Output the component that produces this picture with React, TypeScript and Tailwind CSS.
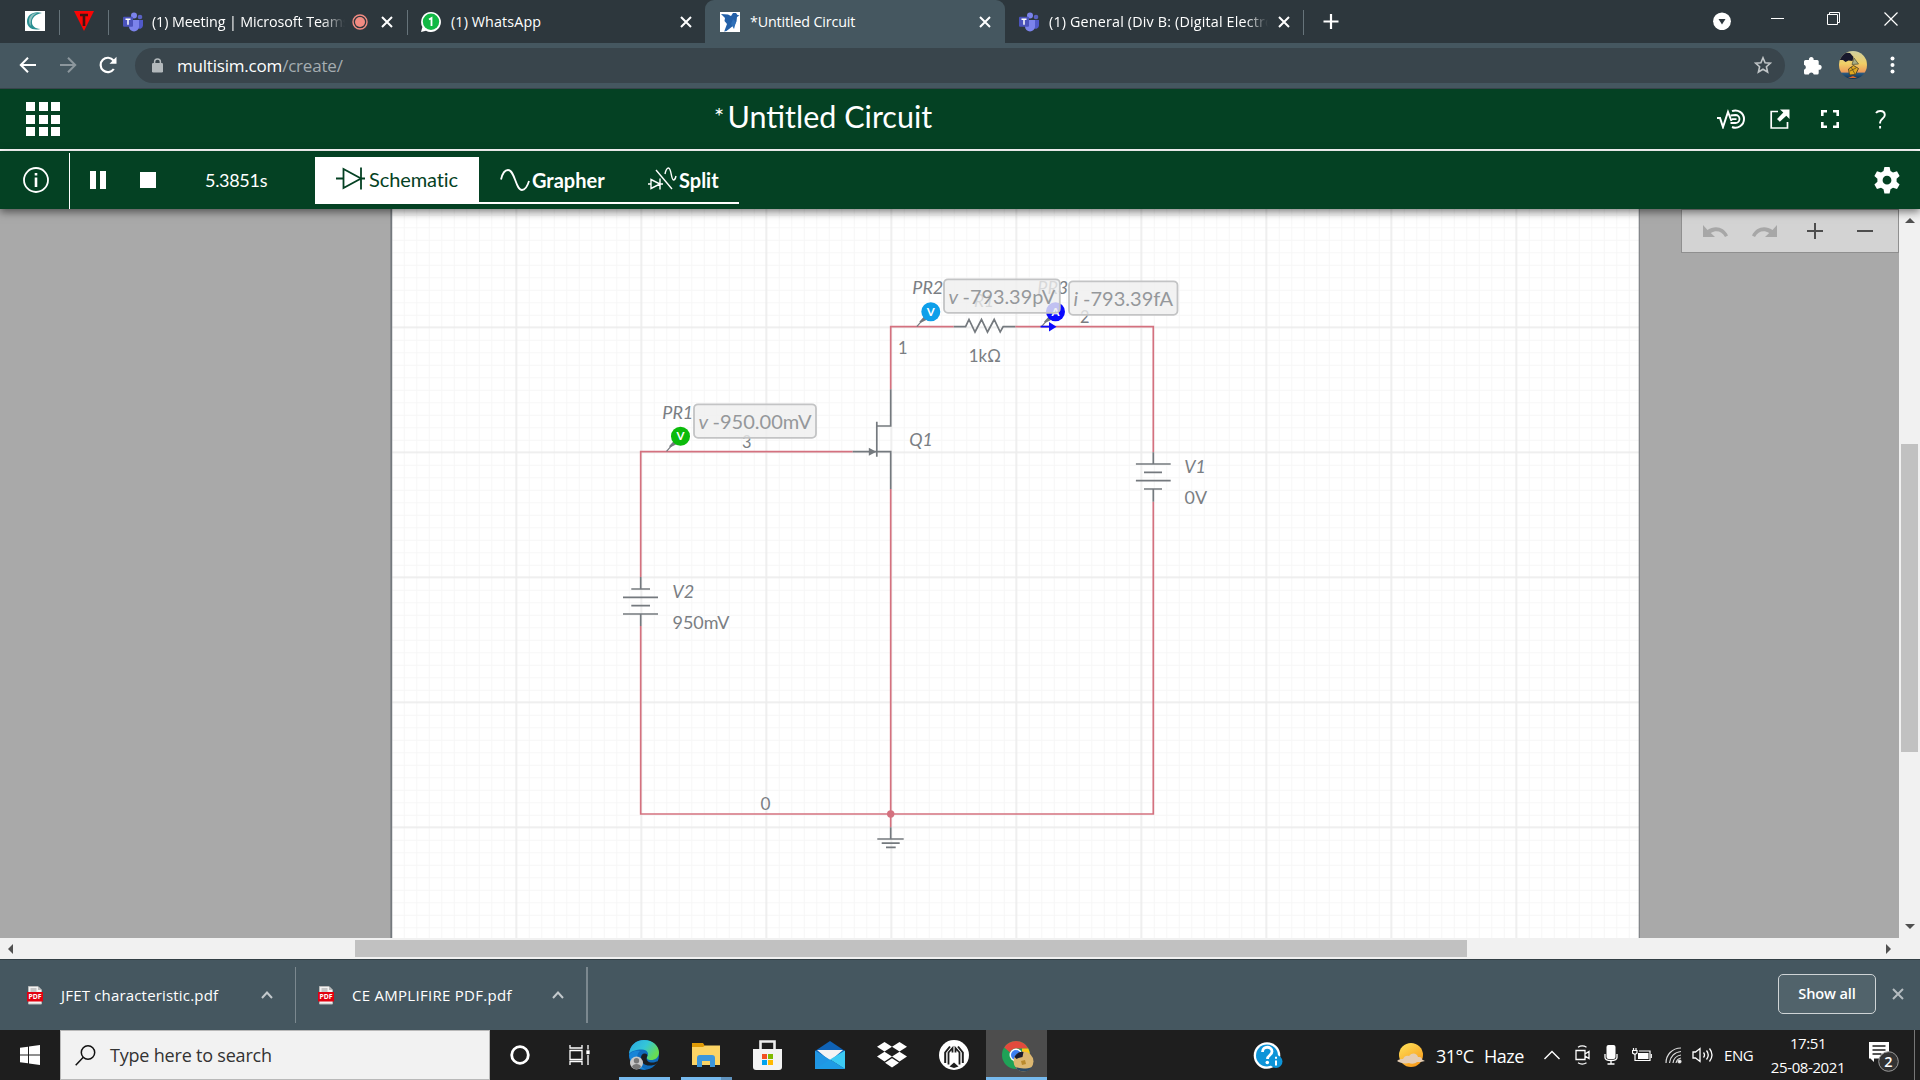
import React from "react";

const UI = "font-['Open_Sans',sans-serif]";

const WIRE = "#d4717f";
const PART = "#74797e";
const LABEL = "#7a7e83";

function TabClose({ className = "" }: { className?: string }) {
  return (
    <svg className={"shrink-0 " + className} width="12" height="12" viewBox="0 0 12 12" stroke="#fff" strokeWidth="2">
      <path d="M1 1l10 10M11 1L1 11" />
    </svg>
  );
}

function TabDivider() {
  return <div className="mt-[10px] h-[25px] w-px shrink-0 bg-[#66737a]" />;
}

function TeamsIcon() {
  return (
    <svg className="shrink-0" width="20" height="20" viewBox="0 0 20 20">
      <circle cx="17" cy="5" r="2.3" fill="#5a62c3" />
      <circle cx="11" cy="3.4" r="3" fill="#7b83eb" />
      <path d="M14.5 8H20v5.5a3.4 3.4 0 0 1-5.5 2.5z" fill="#5059c9" />
      <path d="M6 8h10v6.500a5 5 0 0 1-10 0z" fill="#7b83eb" />
      <rect x="0" y="4.800" width="10" height="10" rx="1" fill="#4b53bc" />
      <path d="M2.500 7.300h5M5 7.300v5.500" stroke="#fff" strokeWidth="1.500" />
    </svg>
  );
}

function TabStrip() {
  return (
    <div className={"flex h-[43px] items-stretch bg-[#2d373d] text-[14.3px] text-white " + UI}>
      <div className="flex w-[59px] shrink-0 pl-[25px] pt-[11px]">
        <svg width="20" height="20" viewBox="0 0 20 20">
          <rect width="20" height="20" fill="#fff" />
          <path d="M17 2C9-.5 2 3.500 2 10.500 2 16 7 20 15.500 18 9.500 17.500 6.500 14.500 7 10 7.400 6.500 11 3 17 2z" fill="#2a8f92" />
          <path d="M12 2C7 2 4 5.500 4 10c0 2 .8 4 2 5C5 10 6.500 5 12 2z" fill="#8fc0c0" />
        </svg>
      </div>
      <TabDivider />
      <div className="flex w-[48px] shrink-0 pl-[14px] pt-[11px]">
        <svg width="20" height="20" viewBox="0 0 20 20">
          <path d="M0 0h20L10 20z" fill="#f90505" />
          <path d="M6 4h8M10 4v11" stroke="#3d1512" strokeWidth="2.600" />
        </svg>
      </div>
      <TabDivider />
      <div className="flex w-[298px] shrink-0 items-center pl-[14px]">
        <TeamsIcon />
        <div className="ml-[9px] w-[193px] overflow-hidden whitespace-nowrap tracking-[-0.1px] [mask-image:linear-gradient(to_right,#000_88%,transparent)]">
          (1) Meeting | Microsoft Teams
        </div>
        <svg className="ml-[7px] shrink-0" width="16" height="16" viewBox="0 0 16 16">
          <circle cx="8" cy="8" r="7" fill="none" stroke="#f28b82" strokeWidth="1.400" />
          <circle cx="8" cy="8" r="5" fill="#f28b82" />
        </svg>
        <TabClose className="ml-[13px]" />
      </div>
      <TabDivider />
      <div className="flex w-[297px] shrink-0 items-center rounded-br-[9px] pl-[13px]">
        <svg className="shrink-0" width="20" height="20" viewBox="0 0 20 20">
          <path d="M10 0a10 10 0 1 1-5 18.700L0 20l1.400-5A10 10 0 0 1 10 0z" fill="#fff" />
          <circle cx="10" cy="9.800" r="8.200" fill="#12b844" />
          <path d="M8 7.500l2.500-1.500v8" fill="none" stroke="#fff" strokeWidth="1.800" />
        </svg>
        <div className="ml-[10px] w-[229px] tracking-[0.12px]">(1) WhatsApp</div>
        <TabClose />
      </div>
      <div className="flex w-[300px] shrink-0 items-center rounded-t-[9px] bg-[#455760] pl-[15px]">
        <svg className="shrink-0" width="20" height="20" viewBox="0 0 20 20">
          <rect width="20" height="20" fill="#fff" />
          <path d="M1 2l7 .5L11 4l2-3 3 0 1.500 2 2 .5-2.500 1.500-.5 4.500c-1 3-3.500 4.500-5.500 6L6.500 19l-2.300.5 2.800-7.500L4.500 9 5 6z" fill="#2360a8" />
          <path d="M13 7l3 3-2 7-3-5z" fill="#2f70b8" />
        </svg>
        <div className="ml-[10px] w-[229px] tracking-[-0.15px]">*Untitled Circuit</div>
        <TabClose />
      </div>
      <div className="flex w-[298px] shrink-0 items-center pl-[14px]">
        <TeamsIcon />
        <div className="ml-[10px] w-[219px] overflow-hidden whitespace-nowrap tracking-[0.18px] [mask-image:linear-gradient(to_right,#000_90%,transparent)]">
          (1) General (Div B: (Digital Electro
        </div>
        <TabClose className="ml-[10px]" />
      </div>
      <TabDivider />
      <svg className="ml-[19px] mt-[14px] shrink-0" width="16" height="16" viewBox="0 0 16 16" stroke="#fff" strokeWidth="2.200">
        <path d="M8 0v15M.5 7.500h15" />
      </svg>
      <svg className="ml-[374px] mt-[12px] shrink-0" width="18" height="18" viewBox="0 0 18 18">
        <circle cx="9" cy="9.300" r="8.900" fill="#fff" />
        <path d="M5.500 7h7L9 12.500z" fill="#2d373d" />
      </svg>
      <div className="ml-[40px] mt-[18px] h-px w-[13px] shrink-0 bg-white" />
      <svg className="ml-[43px] mt-[12px] shrink-0" width="14" height="14" viewBox="0 0 14 14" fill="none" stroke="#fff">
        <path d="M.5 2.500h10v10h-10zM2.500 2.500v-2h10v10h-2" />
      </svg>
      <svg className="ml-[43px] mt-[12px] shrink-0" width="14" height="14" viewBox="0 0 14 14" stroke="#fff" strokeWidth="1.200">
        <path d="M.5.5l13 13M13.500.5l-13 13" />
      </svg>
    </div>
  );
}

function AddressBar() {
  return (
    <div className={"flex h-[46px] items-center border-b border-[#38444b] bg-[#455760] pb-px " + UI}>
      <svg className="ml-[19px] shrink-0" width="18" height="16" viewBox="0 0 18 16" fill="none" stroke="#fff" strokeWidth="2">
        <path d="M17 8H2M9 .8L1.800 8 9 15.200" />
      </svg>
      <svg className="ml-[22px] shrink-0" width="18" height="16" viewBox="0 0 18 16" fill="none" stroke="#8c979d" strokeWidth="2">
        <path d="M1 8h15M9 .8L16.200 8 9 15.200" />
      </svg>
      <svg className="ml-[22px] shrink-0" width="18" height="18" viewBox="0 0 18 18">
        <path d="M14.800 13A7.200 7.200 0 1 1 14.500 4.500" fill="none" stroke="#fff" strokeWidth="2.200" />
        <path d="M17.500.8v7h-7z" fill="#fff" />
      </svg>
      <div className="ml-[18px] flex h-[35px] w-[1650px] shrink-0 items-center rounded-full bg-[#39454c] text-[17px]">
        <svg className="ml-[17px] shrink-0" width="11" height="15" viewBox="0 0 11 15">
          <rect y="5" width="11" height="9.500" rx="1.200" fill="#b3b9bc" />
          <path d="M2.600 6V3.800a2.900 2.900 0 0 1 5.800 0V6" fill="none" stroke="#b3b9bc" strokeWidth="1.500" />
        </svg>
        <div className="ml-[14px] w-[1577px] pt-[2px] tracking-[-0.2px] text-white">
          multisim.com<span className="text-[#a5adb1]">/create/</span>
        </div>
        <svg className="shrink-0" width="18" height="18" viewBox="0 0 18 18" fill="none" stroke="#c0c5c7" strokeWidth="1.600">
          <path d="M9 1.800l2.100 5 5.300.4-4 3.500 1.200 5.300L9 13.200 4.400 16l1.200-5.300-4-3.500 5.300-.4z" />
        </svg>
      </div>
      <svg className="ml-[18px] shrink-0" width="19" height="19" viewBox="0 0 19 19">
        <path
          d="M1 5.500a1.500 1.500 0 0 1 1.500-1.500H6a2.400 2.400 0 1 1 4.600 0h3.600a1.500 1.500 0 0 1 1.500 1.500v3.300a2.500 2.500 0 1 1 0 4.900v3.300a1.500 1.500 0 0 1-1.500 1.500h-3.400a2.600 2.600 0 0 0-5 0H2.500A1.500 1.500 0 0 1 1 17v-3.300a2.600 2.600 0 0 0 0-5z"
          fill="#fff"
        />
      </svg>
      <svg className="ml-[17px] shrink-0" width="28" height="28" viewBox="0 0 28 28">
        <defs>
          <linearGradient id="sunset" x1="0" y1="0" x2="0" y2="1">
            <stop offset="0" stopColor="#cfd0a0" />
            <stop offset=".45" stopColor="#f0cf66" />
            <stop offset=".76" stopColor="#ee9a5a" />
            <stop offset=".78" stopColor="#2d5f86" />
            <stop offset="1" stopColor="#122d4b" />
          </linearGradient>
          <clipPath id="avatarClip">
            <circle cx="14" cy="14" r="14" />
          </clipPath>
        </defs>
        <g clipPath="url(#avatarClip)">
          <rect width="28" height="28" fill="url(#sunset)" />
          <path d="M0 4L6 1.500l5 .5 3.500 4-1 4-4-.5-3 1.500L4 9 0 9z" fill="#17182c" />
          <path d="M15 7l4.500 6-6.500.5z" fill="#a8ad84" stroke="#59583c" strokeWidth=".8" />
          <path d="M9.500 18l5-3.500 5 3-3 6-6 .5z" fill="#e0a91f" stroke="#4c4228" strokeWidth=".9" />
          <path d="M11 20l6-3M12 16l4 7" stroke="#4c4228" strokeWidth=".7" />
          <path d="M9 27h9l-4-2z" fill="#d9672b" />
        </g>
      </svg>
      <svg className="ml-[23px] shrink-0" width="5" height="18" viewBox="0 0 5 18" fill="#fff">
        <circle cx="2.500" cy="2.500" r="2" />
        <circle cx="2.500" cy="9" r="2" />
        <circle cx="2.500" cy="15.500" r="2" />
      </svg>
    </div>
  );
}

function TitleBar() {
  return (
    <div className="flex h-[62px] items-center border-b-2 border-white bg-[#044123] font-['Lato',sans-serif] text-white">
      <div className="ml-[26px] grid w-[34px] shrink-0 grid-cols-3 gap-x-[3.500px] gap-y-[3.500px]">
        {Array.from({ length: 9 }, (_, i) => (
          <div key={i} className="h-[9px] w-[9px] bg-white" />
        ))}
      </div>
      <div className="ml-[654px] flex w-[1003px] shrink-0 items-center pb-[6px]">
        <span className="w-[13.500px] text-[24px] leading-[36px]">*</span>
        <span className="text-[30.5px] leading-[36px]">Untitled Circuit</span>
      </div>
      <svg className="shrink-0" width="28" height="20" viewBox="0 0 28 20" fill="none" stroke="#fff" strokeWidth="2">
        <path d="M0 9h3l3 9L11 3l3.500 9" />
        <path d="M13.500 6.500l5-.5a4 4 0 0 1 0 8h-5M15 10.200h4.500" strokeWidth="1.800" />
        <path d="M15 2.200A8.600 8.600 0 1 1 15 18" />
      </svg>
      <svg className="ml-[25px] shrink-0" width="20" height="20" viewBox="0 0 20 20">
        <path d="M8 2.500H1.200V19H17.500v-6" fill="none" stroke="#fff" strokeWidth="1.700" />
        <path d="M10 .5h9.500V10l-3.200-3.200-6.500 6L7 10l6.300-6.500z" fill="#fff" />
      </svg>
      <svg className="ml-[31px] shrink-0" width="18" height="18" viewBox="0 0 18 18" fill="none" stroke="#fff" strokeWidth="2.600">
        <path d="M1.300 6V1.300H6M12 1.300h4.700V6M16.700 12v4.700H12M6 16.700H1.300V12" />
      </svg>
      <svg className="ml-[36px] shrink-0" width="11" height="19" viewBox="0 0 11 19" fill="none" stroke="#fff" strokeWidth="1.900">
        <path d="M1 3C2 1.500 3.500 1 5.200 1 8 1 9.800 2.500 9.800 5c0 3.500-4.700 4-4.700 7.500v1M5.100 16v2.500" />
      </svg>
    </div>
  );
}

function SimulationBar() {
  return (
    <div className="relative z-10 flex h-[58px] items-center bg-[#044123] font-['Lato',sans-serif] text-white shadow-[0_3px_8px_rgba(0,0,0,0.5)]">
      <svg className="ml-[23px] shrink-0" width="26" height="26" viewBox="0 0 26 26">
        <circle cx="13" cy="13" r="12" fill="none" stroke="#fff" strokeWidth="1.800" />
        <path d="M13 10.500V20M13 6v2.600" stroke="#fff" strokeWidth="2.600" />
      </svg>
      <div className="ml-[20px] h-[56px] w-px shrink-0 self-end bg-white" />
      <div className="ml-[20px] h-[18px] w-[6px] shrink-0 bg-white" />
      <div className="ml-[4px] h-[18px] w-[6px] shrink-0 bg-white" />
      <div className="ml-[34px] h-[16px] w-[16px] shrink-0 bg-white" />
      <div className="ml-[49px] w-[110px] shrink-0 text-[18px] tracking-[-0.3px]">5.3851s</div>
      <div className="flex h-[47px] w-[424px] shrink-0 text-[20px]">
        <div className="flex w-[164px] items-center bg-white text-[#044123]">
          <svg className="-mt-[2px] ml-[21px] shrink-0" width="30" height="24" viewBox="0 0 30 24" fill="none" stroke="#044123" strokeWidth="1.800">
            <path d="M0 11.500h7.500M7.500 2v19L25 11.500zM25 .5v22M25 11.500h4" />
          </svg>
          <span className="-mt-[2px] ml-[3px] tracking-[-0.1px]">Schematic</span>
        </div>
        <div className="flex w-[260px] items-center border-b-2 border-white font-bold">
          <svg className="ml-[21px] mt-[1px] shrink-0" width="30" height="22" viewBox="0 0 30 22" fill="none" stroke="#fff" strokeWidth="1.800">
            <path d="M1 10.500C2.500 4 5 1 8 1c7 0 7.500 20 14 20 3 0 5.500-4 7-9" />
          </svg>
          <span className="ml-[2px] mt-[1px] w-[116px] text-[20px]">Grapher</span>
          <svg className="shrink-0" width="29" height="24" viewBox="0 0 29 24" fill="none" stroke="#fff" strokeWidth="1.400">
            <path d="M0 17h3M3 12.500v9L12 17zM12 11.500v11M12 17h3M8 3l16 19M17 7C18 2 19 1 20.500 1c3 0 2.500 12 5 12 1.500 0 2-1.500 2.500-4" />
          </svg>
          <span className="ml-[2px] mt-[1px] text-[20px]">Split</span>
        </div>
      </div>
      <svg className="ml-[1135px] shrink-0" width="26" height="28" viewBox="0 0 26 28">
        <path
          fill="#fff"
          fillRule="evenodd"
          d="M10.400 1h5.200l.9 4 2.500 1.500 4-1.200L25.600 10l-3 2.700v3l3 2.700L23 22.900l-4-1.200-2.500 1.500-.9 4.300h-5.200l-.9-4.300L7 21.700l-4 1.200L.4 18.400l3-2.700v-3L.4 10 3 5.300l4 1.200L9.500 5zM13 9.800a4.400 4.400 0 1 0 0 8.800 4.400 4.400 0 0 0 0-8.800z"
        />
      </svg>
    </div>
  );
}

function Label({
  x, y, w, children, italic, size = 18, color = LABEL,
}: { x: number; y: number; w: number; children: string; italic?: boolean; size?: number; color?: string }) {
  return (
    <text x={x} y={y} fontSize={size} fill={color} fontStyle={italic ? "italic" : "normal"} textLength={w} lengthAdjust="spacingAndGlyphs">
      {children}
    </text>
  );
}

function Probe({ x, y, color, letter }: { x: number; y: number; color: string; letter: string }) {
  return (
    <g>
      <path d={`M${x - 14} ${y + 15}l7-8`} stroke={PART} strokeWidth="1.200" />
      <path d={`M${x - 11.5} ${y + 10}l4.500-5 3 3-6 3z`} fill={PART} />
      <circle cx={x} cy={y} r="9.500" fill={color} />
      <text x={x} y={y + 4} fontSize="11.500" fontWeight="bold" fill="#fff" textAnchor="middle">
        {letter}
      </text>
    </g>
  );
}

function ProbeReading({ x, y, w, symbol, value, gap }: { x: number; y: number; w: number; symbol: string; value: string; gap: number }) {
  return (
    <g>
      <rect x={x} y={y} width={w} height="33.500" rx="4" fill="#efefef" fillOpacity=".8" stroke="#c3c4c5" strokeWidth="1.800" />
      <text x={x + 4.500} y={y + 25} fontSize="20" fontStyle="italic" fill="#95989b">
        {symbol}
      </text>
      <text x={x + 4.500 + gap} y={y + 25} fontSize="20" fill="#95989b" textLength={w - gap - 9} lengthAdjust="spacingAndGlyphs">
        {value}
      </text>
    </g>
  );
}

function Circuit() {
  return (
    <svg className="block" width="1900" height="729" viewBox="0 209 1900 729" fontFamily="Lato, sans-serif">
      <defs>
        <pattern id="minor" x="391.300" y="202.300" width="12.500" height="12.500" patternUnits="userSpaceOnUse">
          <path d="M.5 0v12.500M0 .5h12.500" stroke="#f6f6f6" strokeWidth="1" fill="none" />
        </pattern>
        <pattern id="major" x="390.300" y="201.300" width="125" height="125" patternUnits="userSpaceOnUse">
          <path d="M1 0v125M0 1h125" stroke="#ececec" strokeWidth="1.600" fill="none" />
        </pattern>
      </defs>
      <rect x="392" y="209" width="1247" height="729" fill="#fff" />
      <rect x="392" y="209" width="1247" height="729" fill="url(#minor)" />
      <rect x="392" y="209" width="1247" height="729" fill="url(#major)" />
      <path d="M391.300 209v729" stroke={PART} strokeWidth="1.800" />
      <path d="M1639.300 209v729" stroke="#808488" strokeWidth="1.200" />

      <g fill="none" stroke={WIRE} strokeWidth="1.700">
        <path d="M852.700 451.700H640.700V577M640.700 626V814H1153.300V501.700M1153.300 452.300V326.700H1015.300M953.700 326.700H890.700V389.300M890.700 489V827.300" />
      </g>
      <circle cx="890.700" cy="814" r="3.700" fill={WIRE} />

      <g fill="none" stroke={PART} strokeWidth="1.700">
        <path d="M953.700 326.700h11.900l3.400-7.200 6 12.500 6.500-12.500 6 12.500 6.700-12.500 6 12.500 3-5.300h12.100" />
        <path d="M890.700 389.300V426H876.800M876.800 421.700v35M852.700 451.700h38V489" />
        <path d="M1153.300 452.300V464M1135.900 464h34.800M1144 472.300h18M1135.900 480.700h34.800M1144 489h18M1153.300 489v12.700" />
        <path d="M640.700 577v12M631.300 589H650M623 597.300h35M631.300 605.700H650M623 614h35M640.700 614v12" />
        <path d="M890.700 827.300V839M877.300 839h26.400M881.700 843.200h18M886 847.400h9.700" />
      </g>
      <path d="M868.800 447.700l7.500 4-7.500 4z" fill={PART} />

      <Label x={912.3} y={294} w={31} italic>PR2</Label>
      <Label x={1037.3} y={294} w={31} italic>PR3</Label>
      <Label x={662.3} y={419} w={31} italic>PR1</Label>
      <Label x={974} y={307} w={20} italic>R1</Label>
      <Label x={898} y={354} w={9.5}>1</Label>
      <Label x={968.8} y={361.500} w={32}>1kΩ</Label>
      <Label x={1080} y={323} w={9.5}>2</Label>
      <Label x={742} y={448} w={9.5}>3</Label>
      <Label x={909.3} y={446} w={23.5} italic>Q1</Label>
      <Label x={1184.3} y={472.700} w={21.5} italic>V1</Label>
      <Label x={1184.5} y={503.700} w={22.5}>0V</Label>
      <Label x={672.3} y={598} w={21.8} italic>V2</Label>
      <Label x={672.5} y={628.700} w={57}>950mV</Label>
      <Label x={760.5} y={810} w={10}>0</Label>

      <Probe x={680.5} y={436.300} color="#0bbb0b" letter="V" />
      <Probe x={930.8} y={311.700} color="#0d9fea" letter="V" />
      <Probe x={1055.5} y={311.700} color="#0a0aff" letter="A" />
      <path d="M1040.600 325.800h8.400v-3.800l7.500 4.700-7.500 4.700v-3.800h-8.400z" fill="#0a0aff" />

      <ProbeReading x={694} y={404.300} w={122} symbol="v" value="-950.00mV" gap={14} />
      <ProbeReading x={944} y={279.300} w={115.800} symbol="v" value="-793.39pV" gap={14} />
      <ProbeReading x={1069} y={281.300} w={108.500} symbol="i" value="-793.39fA" gap={9.500} />
    </svg>
  );
}

function Workspace() {
  return (
    <div>
      <div className="flex h-[729px]">
        <div className="relative w-[1899px] shrink-0 overflow-hidden bg-[#a9a9a9]">
          <Circuit />
          <div className="absolute right-0 top-0 flex h-[44px] w-[218px] items-center border border-[#8f8f8f] bg-[#d3d3d3]">
            <svg className="ml-[20px]" width="27" height="13" viewBox="0 0 27 13">
              <path d="M1 0v12h12L8.800 8C14 4.500 20 6 23 12l3-1.500C22 2 13 0 5.500 5z" fill="#a7a7a7" />
            </svg>
            <svg className="ml-[22px]" width="27" height="13" viewBox="0 0 27 13">
              <path d="M26 0v12H14l4.200-4C13 4.500 7 6 4 12l-3-1.500C5 2 14 0 21.500 5z" fill="#a7a7a7" />
            </svg>
            <svg className="ml-[29px]" width="16" height="16" viewBox="0 0 16 16" stroke="#4d4d4d" strokeWidth="2">
              <path d="M8 0v16M0 8h16" />
            </svg>
            <div className="ml-[34px] h-[2px] w-[16px] bg-[#4d4d4d]" />
          </div>
        </div>
        <div className="flex w-[21px] flex-col items-center bg-[#f1f1f1]">
          <svg className="mt-[9px]" width="10" height="5" viewBox="0 0 10 5">
            <path d="M0 5l5-5 5 5z" fill="#505050" />
          </svg>
          <div className="mt-[221px] h-[308px] w-[17px] bg-[#c1c1c1]" />
          <svg className="mt-[172px]" width="10" height="5" viewBox="0 0 10 5">
            <path d="M0 0l5 5 5-5z" fill="#505050" />
          </svg>
        </div>
      </div>
      <div className="flex h-[21px] items-center bg-[#f1f1f1]">
        <svg className="ml-[8px]" width="5" height="10" viewBox="0 0 5 10">
          <path d="M5 0v10L0 5z" fill="#505050" />
        </svg>
        <div className="ml-[342px] h-[17px] w-[1112px] bg-[#c1c1c1]" />
        <svg className="ml-[419px]" width="5" height="10" viewBox="0 0 5 10">
          <path d="M0 0v10l5-5z" fill="#505050" />
        </svg>
      </div>
    </div>
  );
}

function PdfIcon() {
  return (
    <svg className="shrink-0" width="16" height="19" viewBox="0 0 16 19">
      <path d="M1.500.5h9.500L14.500 4v14h-13z" fill="#f3f3f3" stroke="#b9b9b9" />
      <path d="M3.500 3h6M3.500 5h6" stroke="#999" />
      <path d="M11 .5V4h3.500z" fill="#bbb" />
      <rect y="6" width="16" height="9.500" fill="#e2000f" />
      <text x="8" y="13.400" textAnchor="middle" fontSize="6.800" fontWeight="bold" fill="#fff" fontFamily="Open Sans, sans-serif">
        PDF
      </text>
    </svg>
  );
}

function Chevron() {
  return (
    <svg className="shrink-0" width="12" height="8" viewBox="0 0 12 8" fill="none" stroke="#c3c9cc" strokeWidth="2">
      <path d="M1 7l5-5.500L11 7" />
    </svg>
  );
}

function DownloadsBar() {
  return (
    <div className={"flex h-[71px] items-center border-t border-[#333f45] bg-[#455760] text-[15px] text-white " + UI}>
      <div className="flex w-[295px] shrink-0 items-center pl-[27px]">
        <PdfIcon />
        <div className="ml-[18px] w-[200px] pt-px tracking-[0.18px]">JFET characteristic.pdf</div>
        <Chevron />
      </div>
      <div className="h-[56px] w-px shrink-0 bg-[#7b888f]" />
      <div className="flex w-[290px] shrink-0 items-center pl-[22px]">
        <PdfIcon />
        <div className="ml-[18px] w-[200px] pt-px tracking-[0.28px]">CE AMPLIFIRE PDF.pdf</div>
        <Chevron />
      </div>
      <div className="h-[56px] w-[2px] shrink-0 bg-[#7b888f]" />
      <div className="-mt-[2px] ml-[1190px] flex h-[40px] w-[98px] shrink-0 items-center justify-center rounded-[5px] border border-[#cfd4d6] bg-[#51636b] text-[14.600px] font-semibold tracking-[-0.15px]">
        Show all
      </div>
      <svg className="-mt-[2px] ml-[16px] shrink-0" width="12" height="12" viewBox="0 0 12 12" stroke="#b5bcc0" strokeWidth="2">
        <path d="M1 1l10 10M11 1L1 11" />
      </svg>
    </div>
  );
}

function Taskbar() {
  return (
    <div className={"flex h-[50px] items-center overflow-hidden bg-[#1e1e1e] text-white " + UI}>
      <svg className="ml-[20px] shrink-0" width="20" height="20" viewBox="0 0 20 20" fill="#fff">
        <path d="M0 2.800l8-1.100v7.800H0zM9 1.500L20 0v9.500H9zM0 10.500h8v7.800l-8-1.100zM9 10.500h11V20L9 18.500z" />
      </svg>
      <div className="ml-[20px] flex h-[50px] w-[430px] shrink-0 items-center border border-[#b9b9b9] bg-[#f2f2f2] text-[18px] text-[#333]">
        <svg className="ml-[14px] shrink-0" width="21" height="21" viewBox="0 0 21 21" fill="none" stroke="#111" strokeWidth="1.500">
          <circle cx="13" cy="7.500" r="6.700" />
          <path d="M8.300 12.300L.7 20.200" />
        </svg>
        <span className="ml-[14px] tracking-[-0.2px]">Type here to search</span>
      </div>
      <svg className="ml-[20px] shrink-0" width="20" height="20" viewBox="0 0 20 20" fill="none" stroke="#fff" strokeWidth="2.800">
        <circle cx="10" cy="10" r="8.300" />
      </svg>
      <svg className="ml-[39px] shrink-0" width="22" height="20" viewBox="0 0 22 20" fill="none" stroke="#fff" strokeWidth="1.300">
        <path d="M1 0v3h12V0M1 5.500h12v9H1zM1 20v-3.500h12V20M19 0v4.500M19 10v10" />
        <rect x="18" y="6" width="2" height="2.500" fill="#fff" />
      </svg>
      <div className="ml-[28px] flex h-[50px] w-[51px] shrink-0 flex-col items-center">
        <svg className="-ml-[2px] mt-[10px]" width="30" height="30" viewBox="0 0 30 30">
          <defs>
            <linearGradient id="edgeTop" x1="0" y1="0" x2="1" y2=".5">
              <stop offset="0" stopColor="#2aa6e3" />
              <stop offset=".55" stopColor="#34c6d8" />
              <stop offset="1" stopColor="#68dc52" />
            </linearGradient>
          </defs>
          <circle cx="15" cy="15" r="15" fill="#0f6cbd" />
          <path d="M0 14C1 5 7 0 15 0c9 0 15 6 15 12.500 0 5-4 7.500-8 7.500-3 0-5-1.500-4-3 2.500-3 .5-7.500-5-7.500C7 9.500 2 11 0 14z" fill="url(#edgeTop)" />
          <path d="M18 17c-1 2 0 5 4 5.500 3 .4 5-.5 7-1.500-1 2-2.500 4-4.500 4C18 27 12 24 12 18c0-3 1.500-4.500 3.500-4.500 2.500 0 3.500 1.500 2.500 3.500z" fill="#1b1e22" />
          <path d="M11 11c-4 3-5 13 6 18.500C8 30 1 23 0 15c2-3 6-5 11-4z" fill="#1785d8" />
          <circle cx="7.500" cy="23" r="6.500" fill="#c9c9c9" />
          <circle cx="7.500" cy="20.800" r="2.700" fill="#777" />
          <path d="M3 27c.5-4 8.500-4 9 0-2 3-7 3-9 0z" fill="#777" />
        </svg>
        <div className="mt-[7px] h-[3px] w-full bg-[#76b9ed]" />
      </div>
      <div className="ml-[11px] flex h-[50px] w-[51px] shrink-0 flex-col items-center">
        <svg className="-ml-[2px] mt-[13px]" width="28" height="24" viewBox="0 0 28 24">
          <path d="M0 0h11l2 3-2 3H0z" fill="#e09b06" />
          <path d="M0 4h11l2-1.500h15V22H0z" fill="#fcd465" />
          <path d="M5 24v-9a3 3 0 0 1 3-3h12a3 3 0 0 1 3 3v9h-5v-6H10v6z" fill="#3d97dc" />
        </svg>
        <div className="mt-[10px] flex h-[3px] w-full bg-[#76b9ed]">
          <div className="ml-auto w-[11px] bg-[#5f92bd]" />
        </div>
      </div>
      <svg className="ml-[21px] shrink-0" width="29" height="30" viewBox="0 0 29 30">
        <path d="M7.500 10V1.500h14V10" fill="none" stroke="#eee" strokeWidth="2.600" />
        <path d="M0 9h29v18a3 3 0 0 1-3 3H3a3 3 0 0 1-3-3z" fill="#f3f3f3" />
        <path d="M9 14h5v5H9z" fill="#f25022" />
        <path d="M15 14h5v5h-5z" fill="#7fba00" />
        <path d="M9 20h5v5H9z" fill="#00a4ef" />
        <path d="M15 20h5v5h-5z" fill="#ffb900" />
      </svg>
      <svg className="ml-[33px] shrink-0" width="30" height="28" viewBox="0 0 30 28">
        <path d="M0 10L15 0l15 10v6H0z" fill="#0f62b5" />
        <path d="M2 9h26L15 20z" fill="#f4f4f4" />
        <path d="M0 9.500L30 28H0z" fill="#2096e3" />
        <path d="M30 9.500V28L15 18.500z" fill="#3ccbf4" />
        <path d="M0 28l15-9.500L30 28z" fill="#1e9be5" />
      </svg>
      <svg className="ml-[32px] shrink-0" width="30" height="26" viewBox="0 0 30 26" fill="#fff">
        <path d="M7.500 0L15 4.800 7.500 9.600 0 4.800zM22.500 0L30 4.800l-7.500 4.800L15 4.800zM7.500 9.800l7.500 4.800-7.500 4.800L0 14.600zM22.500 9.800l7.500 4.800-7.500 4.800-7.500-4.800zM15 16.200l7 4.600-7 4.700-7-4.700z" />
      </svg>
      <svg className="ml-[32px] shrink-0" width="30" height="30" viewBox="0 0 30 30">
        <circle cx="15" cy="15" r="15" fill="#fff" />
        <g fill="none" stroke="#1e1e1e">
          <path d="M6.200 23V12.500L11 6.500M23.800 23V12.500L19 6.500" strokeWidth="2" />
          <path d="M9.500 24.500V12.500l4-4.500v4.500M20.500 24.500V12.500l-4-4.500v4.500" strokeWidth="1.800" />
        </g>
        <path d="M10.500 26.500l4.500-4 4.500 4-4.500 1.500z" fill="#1e1e1e" />
      </svg>
      <div className="ml-[17px] flex h-[50px] w-[61px] shrink-0 flex-col items-center bg-[#4d4d4d]">
        <svg className="ml-[3px] mt-[11px]" width="32" height="31" viewBox="0 0 32 31">
          <circle cx="14" cy="14" r="14" fill="#1fa257" />
          <path d="M14 0a14 14 0 0 1 12.300 7.500H14a6.500 6.500 0 0 0-6 4L2.300 6.500A14 14 0 0 1 14 0z" fill="#e24a3d" />
          <path d="M26.300 7.500A14 14 0 0 1 14 28l6-11V7.500z" fill="#fbc81b" />
          <circle cx="14" cy="14" r="6.500" fill="#fff" />
          <circle cx="14" cy="14" r="5" fill="#3d7ff0" />
          <circle cx="21.500" cy="20.500" r="10" fill="#dcb771" />
          <path d="M12.500 16c3-5 6-6 9-5l-1 5-4 1-2 1z" fill="#1b1c2e" />
          <path d="M13 26c5 2 12 2 17 0-3 6-13 6-17 0z" fill="#2c4964" />
          <path d="M19 20l4-1 1 4-4 1z" fill="#b98a2d" />
        </svg>
        <div className="mt-auto h-[3px] w-full bg-[#76b9ed]" />
      </div>

      <svg className="ml-[206px] mt-[2px] shrink-0" width="30" height="28" viewBox="0 0 30 28">
        <circle cx="14" cy="13.500" r="13.300" fill="#fff" />
        <circle cx="14" cy="13.500" r="11" fill="#0d94d8" />
        <path d="M9.500 10c0-6.500 9.500-6 9.500-.5 0 4-4.500 3.500-4.500 7.500" fill="none" stroke="#fff" strokeWidth="2.800" />
        <circle cx="14.300" cy="20.500" r="1.800" fill="#fff" />
        <circle cx="23" cy="19.500" r="6.500" fill="#0d94d8" />
        <path d="M23 18.500v5M23 14.800v2" stroke="#fff" strokeWidth="2" />
      </svg>
      <svg className="ml-[114px] shrink-0" width="28" height="24" viewBox="0 0 28 24">
        <defs>
          <linearGradient id="sun" x1="0" y1="0" x2=".6" y2="1">
            <stop offset="0" stopColor="#ffe45c" />
            <stop offset="1" stopColor="#f99d1c" />
          </linearGradient>
        </defs>
        <circle cx="14" cy="12" r="12" fill="url(#sun)" />
        <path d="M0 18c2-2 5-2 6-2 1-3 4-4 6-3 3-4 8-3 9 1 3-.5 4 1 4 2.500l3 1.500c-3 1-6 1-8 1-2 2-6 2-8 1-4 1-9 0-12-2z" fill="#e5cdb3" />
      </svg>
      <div className="ml-[11px] w-[48px] shrink-0 pt-[2px] text-[18px] tracking-[-0.5px]">31°C</div>
      <div className="w-[60px] shrink-0 pt-[2px] text-[18px] tracking-[-0.5px]">Haze</div>
      <svg className="shrink-0" width="16" height="10" viewBox="0 0 16 10" fill="none" stroke="#fff" strokeWidth="1.400">
        <path d="M.5 9L8 1.500 15.500 9" />
      </svg>
      <svg className="ml-[15px] shrink-0" width="16" height="20" viewBox="0 0 16 20" fill="none" stroke="#fff" strokeWidth="1.300">
        <path d="M3 2.200C5.500.6 9 .6 11.500 2.200M3 17.800c2.500 1.600 6 1.600 8.500 0M1 5.500h9v9H1zM10 9l4-2.500v7L10 11" />
      </svg>
      <svg className="ml-[13px] shrink-0" width="14" height="20" viewBox="0 0 14 20">
        <rect x="2.500" width="9" height="14" rx="2" fill="#fff" />
        <path d="M1 9v3.500c0 4 12 4 12 0V9M7 15.500V19M3.500 19h7" fill="none" stroke="#fff" strokeWidth="1.300" />
      </svg>
      <svg className="ml-[14px] shrink-0" width="20" height="15" viewBox="0 0 20 15" fill="none" stroke="#fff" strokeWidth="1.200">
        <path d="M1.500 0v3M4 0v3M.5 2.500h4.500v2.500L3 6.500.5 5zM3 6v6.500h15V3H7" />
        <path d="M6 5h10.500v6H6z" fill="#fff" stroke="none" />
        <path d="M19.300 6v4" />
      </svg>
      <svg className="ml-[13px] shrink-0" width="17" height="17" viewBox="0 0 17 17" fill="none" stroke="#ddd" strokeWidth="1.200">
        <path d="M1 16C1 8 7 1 16 1M4.500 16C5 10 9.500 5 16 4.500M8 16c.5-4 3.500-7.500 8-8M11 16c.5-2.500 2.500-4.500 5-5" />
        <circle cx="14.500" cy="14.500" r="1.500" fill="#fff" />
      </svg>
      <svg className="ml-[10px] shrink-0" width="22" height="16" viewBox="0 0 22 16" fill="none" stroke="#fff" strokeWidth="1.300">
        <path d="M1 5h2.500L8 1.500v13L3.500 11H1zM11.500 5.500q2 2.500 0 5M14.500 3.500q3.500 4.500 0 9M17.500 1.500q5 6.500 0 13" />
      </svg>
      <div className="ml-[10px] w-[45px] shrink-0 pt-px text-[15px] tracking-[-0.4px]">ENG</div>
      <div className="flex w-[78px] shrink-0 flex-col items-center text-[15px] leading-[24px] tracking-[-0.4px]">
        <div>17:51</div>
        <div>25-08-2021</div>
      </div>
      <div className="relative ml-[22px] h-[34px] w-[32px] shrink-0">
        <svg className="absolute left-0 top-[4px]" width="30" height="30" viewBox="0 0 30 30">
          <path d="M0 0h20v16.500H5V20l-3.500-3.500H0z" fill="#fff" />
          <path d="M3.500 4h13M3.500 8h13M3.500 12h9" stroke="#1e1e1e" strokeWidth="1.400" />
          <circle cx="19.500" cy="19.500" r="9.800" fill="#333" stroke="#9a9a9a" />
          <text x="19.500" y="24.500" fontSize="14.500" fontWeight="600" textAnchor="middle" fill="#fff">2</text>
        </svg>
      </div>
      <div className="ml-[13px] h-[50px] w-px shrink-0 bg-[#777]" />
    </div>
  );
}

export default function App() {
  return (
    <div className="flex h-[1080px] w-[1920px] flex-col overflow-hidden bg-[#a9a9a9]">
      <TabStrip />
      <AddressBar />
      <TitleBar />
      <SimulationBar />
      <Workspace />
      <DownloadsBar />
      <Taskbar />
    </div>
  );
}
